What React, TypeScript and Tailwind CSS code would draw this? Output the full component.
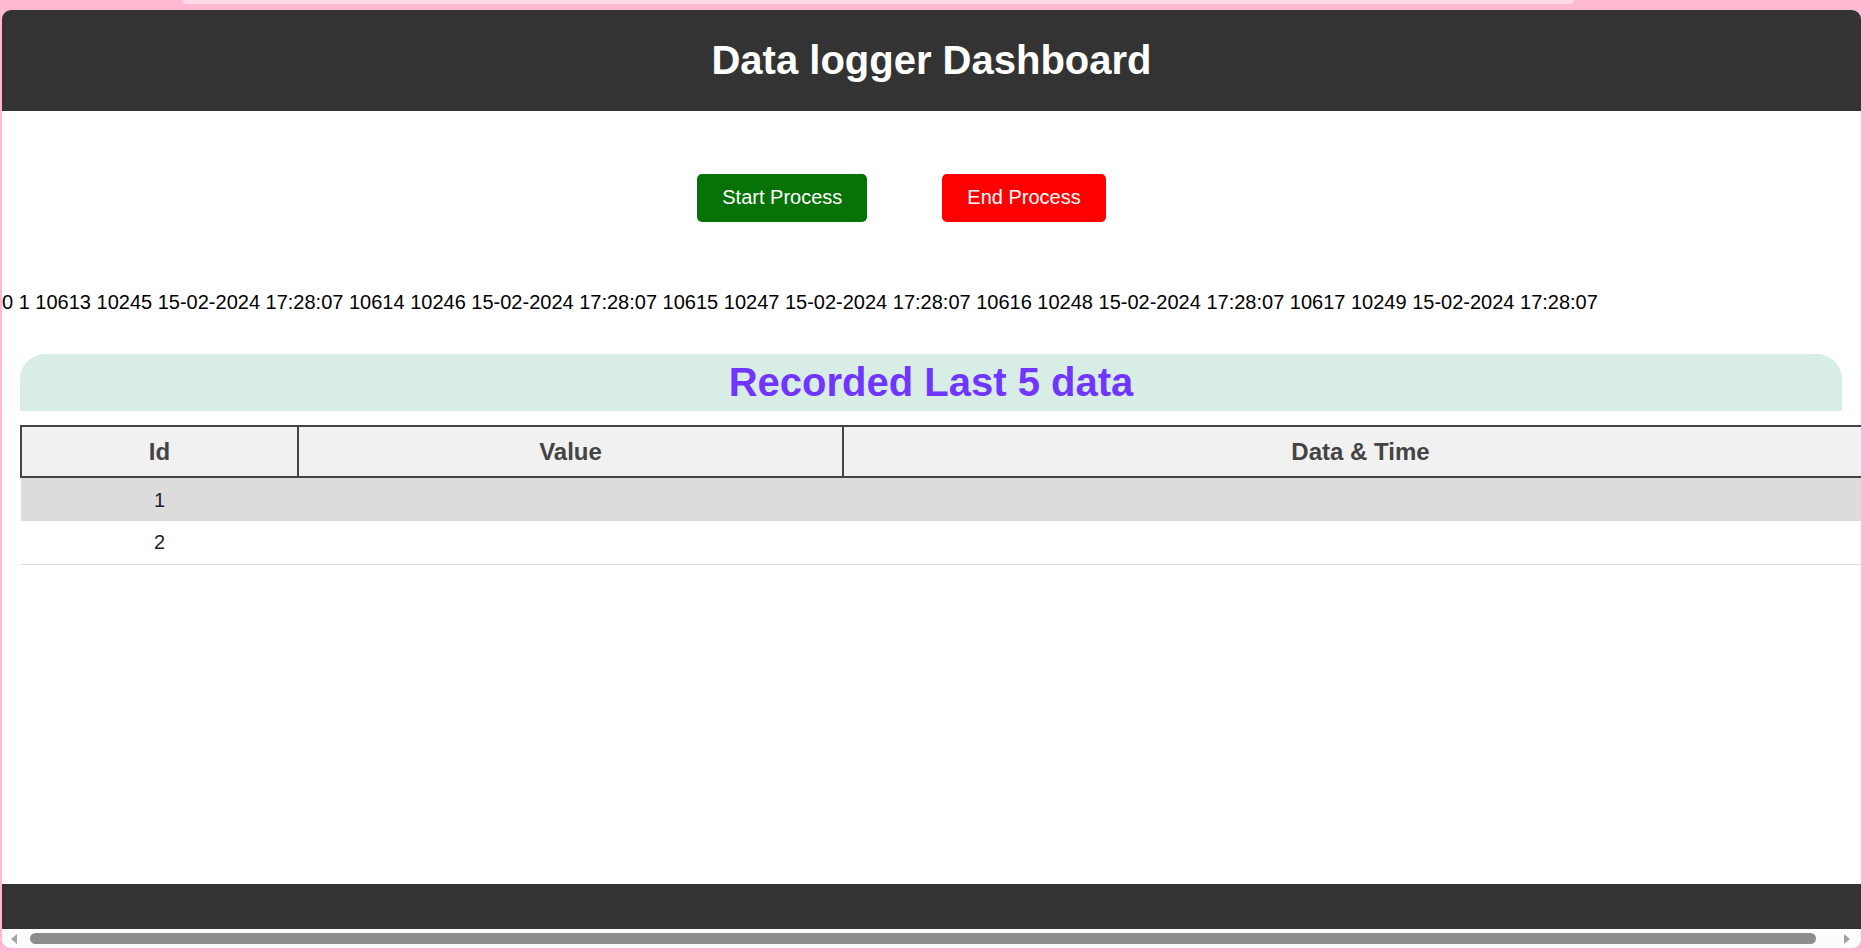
import React from "react";

const dataLine =
  "0 1 10613 10245 15-02-2024 17:28:07 10614 10246 15-02-2024 17:28:07 10615 10247 15-02-2024 17:28:07 10616 10248 15-02-2024 17:28:07 10617 10249 15-02-2024 17:28:07";

export default function App() {
  return (
    <div className="w-[1870px] h-[952px] bg-[#ffb9d1] flex flex-col overflow-hidden font-['Liberation_Sans',Arial,sans-serif]">
      <div className="h-[10px] shrink-0 flex">
        <div className="ml-[183px] w-[1390px] h-[4px] bg-[#ffdbe7] rounded-b-[6px]" />
      </div>
      <div className="ml-[2px] w-[1859px] h-[938px] bg-white rounded-[9px] overflow-hidden flex flex-col shrink-0">
        <header className="h-[101px] shrink-0 bg-[#333333] flex items-center justify-center pb-[2px]">
          <h1 className="text-white font-bold text-[40px] leading-[46px]">Data logger Dashboard</h1>
        </header>

        <main className="flex-1 overflow-hidden flex flex-col">
          <div className="mt-[63px] flex justify-center gap-[75px] pr-[60px]">
            <button className="h-[48px] px-[25px] rounded-[5px] bg-[#077307] text-white text-[20px] leading-[23px] pb-[1px]">
              Start Process
            </button>
            <button className="h-[48px] px-[25px] rounded-[5px] bg-[#ff0000] text-white text-[20px] leading-[23px] pb-[1px]">
              End Process
            </button>
          </div>

          <p className="mt-[69px] text-[20px] leading-[23px] text-black whitespace-nowrap">{dataLine}</p>

          <div className="mt-[40px] ml-[18px] mr-[19px] h-[57px] rounded-t-[25px] bg-[#d8ede6] flex items-center justify-center pb-[2px]">
            <h2 className="text-[40px] leading-[46px] font-bold text-[#7035ff]">Recorded Last 5 data</h2>
          </div>

          <div className="mt-[14px] ml-[18px] w-[1859px] shrink-0">
            <table className="w-[1859px] table-fixed border-collapse">
              <colgroup>
                <col className="w-[277px]" />
                <col className="w-[545px]" />
                <col />
              </colgroup>
              <thead>
                <tr className="h-[51px]">
                  <th className="border-2 border-[#444444] bg-[#f1f1f1] text-[24px] font-bold text-[#444444]">Id</th>
                  <th className="border-2 border-[#444444] bg-[#f1f1f1] text-[24px] font-bold text-[#444444]">Value</th>
                  <th className="border-2 border-[#444444] bg-[#f1f1f1] text-[24px] font-bold text-[#444444]">Data &amp; Time</th>
                </tr>
              </thead>
              <tbody>
                <tr className="h-[44px] bg-[#dcdcdc]">
                  <td className="text-center text-[20px] text-[#222222]">1</td>
                  <td />
                  <td />
                </tr>
                <tr className="h-[43px] bg-white border-b border-[#dddddd]">
                  <td className="text-center text-[20px] text-[#222222]">2</td>
                  <td />
                  <td />
                </tr>
              </tbody>
            </table>
          </div>
        </main>

        <footer className="h-[45px] shrink-0 bg-[#333333]" />

        <div className="h-[19px] shrink-0 bg-[#fcfcfc] flex items-center">
          <svg className="ml-[9px]" width="6" height="10" viewBox="0 0 6 10">
            <path d="M6 0 L0 5 L6 10 Z" fill="#a3a3a3" />
          </svg>
          <div className="ml-[13px] w-[1786px] h-[11px] rounded-full bg-[#8c8c8c]" />
          <svg className="ml-auto mr-[11px]" width="6" height="10" viewBox="0 0 6 10">
            <path d="M0 0 L6 5 L0 10 Z" fill="#a3a3a3" />
          </svg>
        </div>
      </div>
    </div>
  );
}
